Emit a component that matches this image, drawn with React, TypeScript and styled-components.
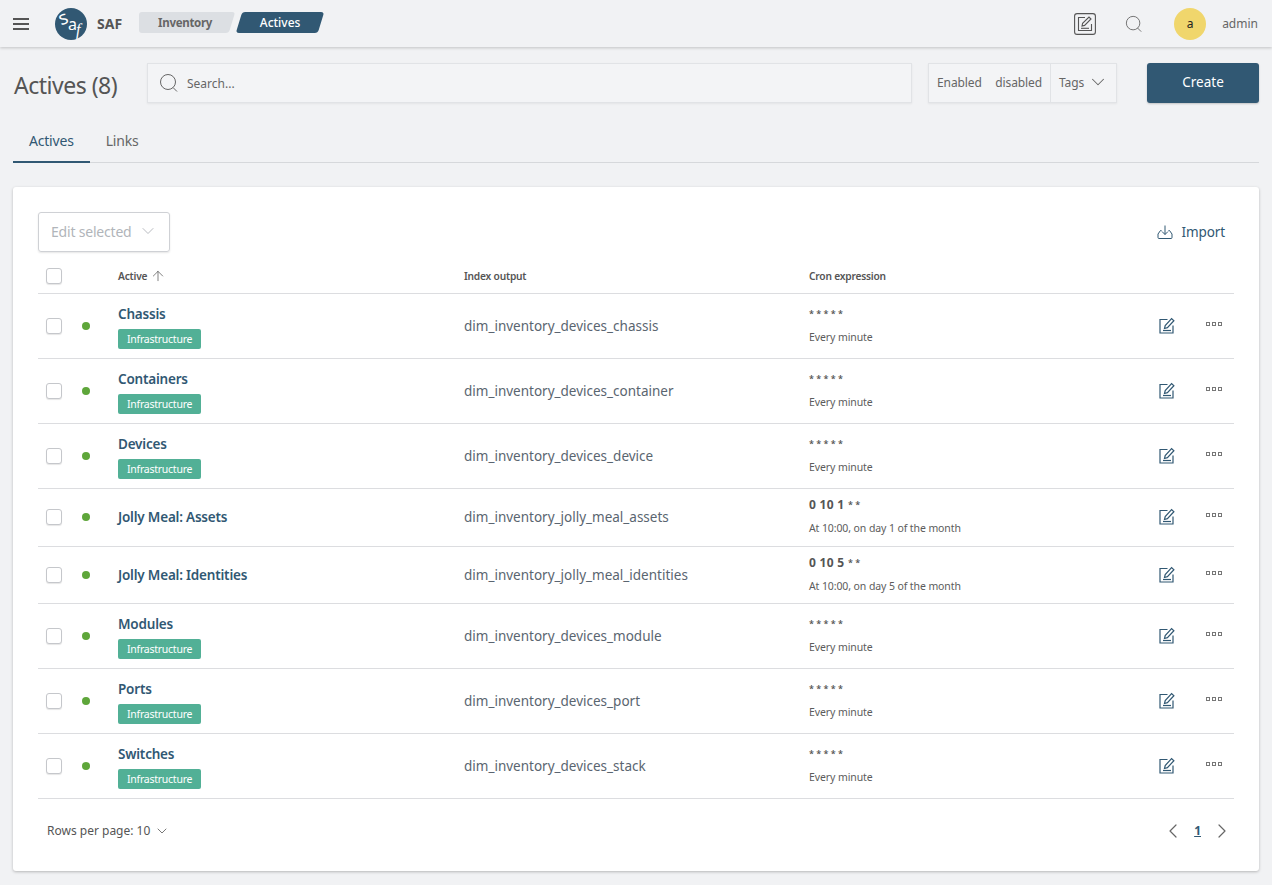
import React from "react";
import styled, { createGlobalStyle } from "styled-components";
import { ChevronDown, ChevronLeft, ChevronRight, ArrowUp } from "lucide-react";

const FONT = `"Noto Sans", "Liberation Sans", sans-serif`;

const GlobalStyle = createGlobalStyle`
  html, body {
    margin: 0;
    padding: 0;
    background: #f1f2f4;
    font-family: ${FONT};
    color: #4a4a4a;
  }
  * { box-sizing: border-box; }
`;

const Page = styled.div`
  width: 1272px;
  height: 885px;
  overflow: hidden;
  background: #f1f2f4;
`;

const TopBar = styled.header`
  height: 47px;
  display: flex;
  align-items: center;
  padding: 0 13px;
  background: #f1f2f4;
  box-shadow: 0 1px 3px rgba(0, 0, 0, 0.2);
`;

const Burger = styled.div`
  width: 16px;
  height: 12px;
  margin-right: 26px;
  border-top: 2px solid #555;
  border-bottom: 2px solid #555;
  position: relative;
  &::after {
    content: "";
    position: absolute;
    left: 0;
    right: 0;
    top: 3px;
    height: 2px;
    background: #555;
  }
`;

const AppName = styled.span`
  margin: 0 17px 0 10px;
  font-size: 14px;
  font-weight: 700;
  color: #555;
`;

const Crumb = styled.div<{ $active?: boolean }>`
  position: relative;
  z-index: 0;
  width: ${(p) => (p.$active ? "86px" : "96px")};
  height: 21px;
  margin: 0 ${(p) => (p.$active ? "0" : "2px")} 2px 0;
  padding-right: ${(p) => (p.$active ? "0" : "4px")};
  display: flex;
  align-items: center;
  justify-content: center;
  font-size: ${(p) => (p.$active ? "12px" : "11.5px")};
  font-weight: ${(p) => (p.$active ? 500 : 700)};
  letter-spacing: ${(p) => (p.$active ? "0" : "-0.3px")};
  color: ${(p) => (p.$active ? "#fff" : "#666")};
  &::before {
    content: "";
    position: absolute;
    z-index: -1;
    inset: 0 ${(p) => (p.$active ? "2px" : "3px")} 0 ${(p) => (p.$active ? "2px" : "8px")};
    border-radius: 3px;
    background: ${(p) => (p.$active ? "#315873" : "#dcdfe3")};
    transform: skewX(-17deg);
  }
  ${(p) =>
    !p.$active &&
    `&::after {
      content: "";
      position: absolute;
      z-index: -1;
      left: 0;
      top: 0;
      bottom: 0;
      width: 30px;
      border-radius: 3px;
      background: #dcdfe3;
    }`}
`;

const TopActions = styled.div`
  margin-left: auto;
  display: flex;
  align-items: center;
`;

const TopIcon = styled.div<{ $gap: number }>`
  display: flex;
  margin-right: ${(p) => p.$gap}px;
`;

const Avatar = styled.div`
  width: 32px;
  height: 32px;
  border-radius: 50%;
  background: #f0d66c;
  color: #222;
  font-size: 12px;
  display: flex;
  align-items: center;
  justify-content: center;
  margin-right: 16px;
`;

const UserName = styled.span`
  font-size: 12px;
  color: #666;
  margin-right: 1px;
`;

const Toolbar = styled.div`
  display: flex;
  align-items: center;
  height: 40px;
  margin: 16px 13px 0;
`;

const Title = styled.h1`
  width: 134px;
  margin: 0;
  padding: 3px 0 0 1px;
  font-size: 23px;
  font-weight: 400;
  color: #555;
  white-space: nowrap;
  letter-spacing: -0.5px;
`;

const SearchBox = styled.div`
  width: 765px;
  height: 40px;
  display: flex;
  align-items: center;
  gap: 8px;
  padding-left: 11px;
  margin-right: 16px;
  background: #f3f4f6;
  border: 1px solid #e1e3e6;
  box-shadow: 0 1px 2px rgba(0, 0, 0, 0.06);
  font-size: 12px;
  color: #666;
`;

const FilterBox = styled.div`
  width: 189px;
  height: 40px;
  display: flex;
  align-items: center;
  margin-right: 30px;
  background: #f3f4f6;
  border: 1px solid #e1e3e6;
  box-shadow: 0 1px 2px rgba(0, 0, 0, 0.06);
  font-size: 12px;
  letter-spacing: -0.1px;
  color: #666;
`;

const FilterStates = styled.div`
  width: 122px;
  height: 100%;
  display: flex;
  align-items: center;
  justify-content: space-between;
  padding: 0 8px 2px;
  border-right: 1px solid #e1e3e6;
`;

const FilterTags = styled.div`
  flex: 1;
  display: flex;
  align-items: center;
  justify-content: space-between;
  padding: 0 7px 2px 8px;
`;

const CreateButton = styled.button`
  width: 112px;
  height: 40px;
  padding: 0 0 2px;
  border: none;
  border-radius: 3px;
  background: #315873;
  color: #fff;
  font-family: ${FONT};
  font-size: 13.5px;
  box-shadow: 0 1px 2px rgba(0, 0, 0, 0.2);
`;

const Tabs = styled.nav`
  display: flex;
  height: 38px;
  margin: 22px 13px 0;
  border-bottom: 1px solid #d6d8db;
`;

const Tab = styled.div<{ $active?: boolean }>`
  padding: 0 16px 6px;
  display: flex;
  align-items: center;
  height: 38px;
  font-size: 14px;
  letter-spacing: -0.2px;
  color: ${(p) => (p.$active ? "#315873" : "#666")};
  border-bottom: 2px solid ${(p) => (p.$active ? "#315873" : "transparent")};
`;

const Card = styled.section`
  height: 684px;
  margin: 24px 13px 0;
  padding: 25px 25px 0;
  background: #fff;
  border-radius: 3px;
  box-shadow: 0 1px 3px rgba(0, 0, 0, 0.25);
`;

const CardTop = styled.div`
  display: flex;
  align-items: center;
  justify-content: space-between;
  height: 40px;
`;

const EditSelected = styled.div`
  width: 132px;
  height: 40px;
  display: flex;
  align-items: center;
  justify-content: space-between;
  padding: 0 11px 2px 12px;
  border: 1px solid #cfd1d5;
  border-radius: 3px;
  box-shadow: 0 1px 2px rgba(0, 0, 0, 0.1);
  font-size: 14px;
  letter-spacing: -0.2px;
  color: #b1b5ba;
`;

const ImportLink = styled.div`
  display: flex;
  align-items: center;
  gap: 8px;
  margin-right: 9px;
  font-size: 13.5px;
  letter-spacing: -0.1px;
  color: #315873;
`;

const Row = styled.div<{ $h: number; $top?: number; $bottom?: number }>`
  display: grid;
  grid-template-columns: 44px 36px 346px 345px 350px 1fr;
  align-items: center;
  height: ${(p) => p.$h}px;
  padding: ${(p) => p.$top ?? 0}px 0 ${(p) => p.$bottom ?? 0}px;
  border-bottom: 1px solid #dcdde0;
`;

const HeadText = styled.div`
  display: flex;
  align-items: center;
  gap: 3px;
  font-size: 10.2px;
  font-weight: 600;
  color: #555;
  letter-spacing: -0.2px;
`;

const CheckCell = styled.div`
  padding-left: 8px;
`;

const Checkbox = styled.div`
  width: 16px;
  height: 16px;
  border: 1px solid #c5c7cb;
  border-radius: 3px;
  background: #fff;
  box-shadow: 0 1px 1px rgba(0, 0, 0, 0.1);
`;

const Dot = styled.div`
  width: 8px;
  height: 8px;
  border-radius: 50%;
  background: #5ea63a;
`;

const NameCell = styled.div<{ $tagged: boolean }>`
  display: flex;
  flex-direction: column;
  align-items: flex-start;
  gap: 6px;
  padding-top: ${(p) => (p.$tagged ? "2px" : "0")};
`;

const Name = styled.div`
  font-size: 13.5px;
  line-height: 18px;
  font-weight: 600;
  letter-spacing: -0.2px;
  color: #315873;
`;

const TagLabel = styled.span`
  height: 20px;
  padding: 0 9px;
  display: flex;
  align-items: center;
  border-radius: 2px;
  background: #52b096;
  color: #fff;
  font-size: 10.5px;
  letter-spacing: -0.25px;
`;

const IndexCell = styled.div`
  font-size: 13.5px;
  color: #5a6570;
`;

const CronCell = styled.div`
  display: flex;
  flex-direction: column;
  gap: 8px;
`;

const CronExpr = styled.div`
  height: 16px;
  margin-top: -2px;
  font-size: 12px;
  line-height: 16px;
  font-weight: 700;
  letter-spacing: 0.3px;
  color: #555;
  white-space: pre;
`;

const CronStars = styled.span`
  font-size: 9px;
  font-weight: 600;
  letter-spacing: 0;
  vertical-align: 1px;
`;

const CronHint = styled.div`
  font-size: 10.5px;
  line-height: 14px;
  letter-spacing: -0.1px;
  color: #5c5c5c;
`;

const Actions = styled.div`
  display: flex;
  align-items: center;
  gap: 31px;
  margin-top: -1px;
`;

const MoreDots = styled.div`
  display: flex;
  gap: 2px;
  margin-top: -4px;
  & > i {
    width: 4px;
    height: 4px;
    border: 1px solid #777;
    display: block;
  }
`;

const Footer = styled.div`
  display: flex;
  align-items: center;
  justify-content: space-between;
  height: 63px;
  padding-left: 9px;
`;

const RowsPerPage = styled.div`
  display: flex;
  align-items: center;
  gap: 4px;
  font-size: 12px;
  color: #555;
`;

const Pager = styled.div`
  display: flex;
  align-items: center;
  gap: 9px;
  color: #666;
`;

const PageNumber = styled.span`
  font-size: 12px;
  font-weight: 700;
  color: #315873;
  text-decoration: underline;
`;

const Logo = () => (
  <svg width="32" height="32" viewBox="0 0 32 32" overflow="visible">
    <circle cx="16" cy="16" r="16" fill="#315873" />
    <text x="4" y="16" fontFamily="Noto Sans, sans-serif" fontSize="19" fill="#fff" transform="rotate(-20 9 11)">s</text>
    <text x="13" y="22" fontFamily="Noto Sans, sans-serif" fontSize="16" fill="#fff">a</text>
    <text x="21" y="27" fontFamily="Liberation Serif, serif" fontStyle="italic" fontSize="16" fill="#fff">f</text>
  </svg>
);

const SearchIcon = ({ size = 20, color = "#666" }: { size?: number; color?: string }) => (
  <svg width={size} height={size} viewBox="0 0 20 20" fill="none" stroke={color} strokeWidth="1">
    <circle cx="9" cy="9" r="7.5" />
    <path d="M14 14.5 L18 18.5" />
  </svg>
);

const EditIcon = () => (
  <svg width="16" height="17" viewBox="0 0 16 17" fill="none" stroke="#315873" strokeWidth="1.2">
    <path d="M8.5 2.5H1v13.5h13V8.5" />
    <path d="M5.5 11.5l.7-3L12.6 1.5l2.3 2.2-6.5 7-2.9.8z" />
    <path d="M4 13.5h8" />
  </svg>
);

const ComposeIcon = () => (
  <svg width="22" height="22" viewBox="0 0 22 22" fill="none" stroke="#555" strokeWidth="1.1">
    <rect x="0.6" y="0.6" width="20.8" height="20.8" rx="2.5" />
    <path d="M11 4.5H4.5v13h13V11" />
    <path d="M8 13l.6-2.6L15 4l2 2-6.4 6.4L8 13z" />
    <path d="M7 15.3h8" />
  </svg>
);

const ImportIcon = () => (
  <svg width="16" height="16" viewBox="0 0 16 16" fill="none" stroke="#315873" strokeWidth="1">
    <path d="M4.5 6.5H3.5L1 10v3.5a1 1 0 0 0 1 1h12a1 1 0 0 0 1-1V10l-2.5-3.5h-1" />
    <path d="M8 1.5V10.5M5 7.5L8 10.5 11 7.5" />
  </svg>
);

interface Active {
  name: string;
  index: string;
  cron: string;
  stars: string;
  hint: string;
  tagged: boolean;
  height: number;
  bottom?: number;
}

const EVERY = { cron: "", stars: "* * * * *", hint: "Every minute", tagged: true, height: 65 };

const ACTIVES: Active[] = [
  { name: "Chassis", index: "dim_inventory_devices_chassis", ...EVERY },
  { name: "Containers", index: "dim_inventory_devices_container", ...EVERY },
  { name: "Devices", index: "dim_inventory_devices_device", ...EVERY },
  { name: "Jolly Meal: Assets", index: "dim_inventory_jolly_meal_assets", cron: "0 10 1 ", stars: "* *", hint: "At 10:00, on day 1 of the month", tagged: false, height: 58, bottom: 1 },
  { name: "Jolly Meal: Identities", index: "dim_inventory_jolly_meal_identities", cron: "0 10 5 ", stars: "* *", hint: "At 10:00, on day 5 of the month", tagged: false, height: 57 },
  { name: "Modules", index: "dim_inventory_devices_module", ...EVERY },
  { name: "Ports", index: "dim_inventory_devices_port", ...EVERY },
  { name: "Switches", index: "dim_inventory_devices_stack", ...EVERY },
];

export default function App() {
  return (
    <Page>
      <GlobalStyle />
      <TopBar>
        <Burger />
        <Logo />
        <AppName>SAF</AppName>
        <Crumb>Inventory</Crumb>
        <Crumb $active>Actives</Crumb>
        <TopActions>
          <TopIcon $gap={29}><ComposeIcon /></TopIcon>
          <TopIcon $gap={31}><SearchIcon size={18} /></TopIcon>
          <Avatar>a</Avatar>
          <UserName>admin</UserName>
        </TopActions>
      </TopBar>

      <Toolbar>
        <Title>Actives (8)</Title>
        <SearchBox>
          <SearchIcon />
          Search...
        </SearchBox>
        <FilterBox>
          <FilterStates>
            <span>Enabled</span>
            <span>disabled</span>
          </FilterStates>
          <FilterTags>
            Tags
            <ChevronDown size={22} strokeWidth={1.1} />
          </FilterTags>
        </FilterBox>
        <CreateButton>Create</CreateButton>
      </Toolbar>

      <Tabs>
        <Tab $active>Actives</Tab>
        <Tab>Links</Tab>
      </Tabs>

      <Card>
        <CardTop>
          <EditSelected>
            Edit selected
            <ChevronDown size={20} strokeWidth={1.1} />
          </EditSelected>
          <ImportLink>
            <ImportIcon />
            Import
          </ImportLink>
        </CardTop>

        <Row $h={42} $top={7}>
          <CheckCell><Checkbox /></CheckCell>
          <div />
          <HeadText>Active <ArrowUp size={16} strokeWidth={1.1} /></HeadText>
          <HeadText>Index output</HeadText>
          <HeadText>Cron expression</HeadText>
          <div />
        </Row>

        {ACTIVES.map((a) => (
          <Row key={a.name} $h={a.height} $bottom={a.bottom}>
            <CheckCell><Checkbox /></CheckCell>
            <Dot />
            <NameCell $tagged={a.tagged}>
              <Name>{a.name}</Name>
              {a.tagged && <TagLabel>Infrastructure</TagLabel>}
            </NameCell>
            <IndexCell>{a.index}</IndexCell>
            <CronCell>
              <CronExpr>{a.cron}<CronStars>{a.stars}</CronStars></CronExpr>
              <CronHint>{a.hint}</CronHint>
            </CronCell>
            <Actions>
              <EditIcon />
              <MoreDots><i /><i /><i /></MoreDots>
            </Actions>
          </Row>
        ))}

        <Footer>
          <RowsPerPage>
            Rows per page: 10
            <ChevronDown size={16} strokeWidth={1.2} />
          </RowsPerPage>
          <Pager>
            <ChevronLeft size={24} strokeWidth={1.2} />
            <PageNumber>1</PageNumber>
            <ChevronRight size={24} strokeWidth={1.2} />
          </Pager>
        </Footer>
      </Card>
    </Page>
  );
}
